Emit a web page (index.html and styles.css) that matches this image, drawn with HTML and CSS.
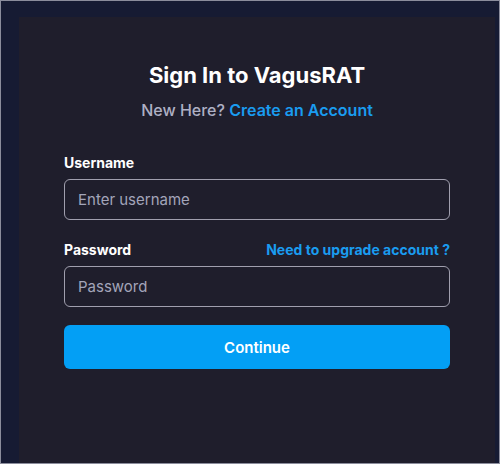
FILE: index.html
```html
<!DOCTYPE html>
<html>
<head>
<meta charset="utf-8">
<link rel="stylesheet" href="styles.css">
</head>
<body>
<div class="frame">
  <div class="card">
    <h1 class="title">Sign In to VagusRAT</h1>
    <p class="subtitle">New Here? <a class="link" href="#">Create an Account</a></p>
    <div class="field">
      <div class="label-row"><label class="label">Username</label></div>
      <input class="input" type="text" placeholder="Enter username">
    </div>
    <div class="field">
      <div class="label-row"><label class="label">Password</label><a class="upgrade" href="#">Need to upgrade account ?</a></div>
      <input class="input" type="password" placeholder="Password">
    </div>
    <button class="btn">Continue</button>
  </div>
</div>
</body>
</html>
```
FILE: styles.css
```css
html, body { margin: 0; padding: 0; }
body {
  font-family: "Inter", "Noto Sans", sans-serif;
  background: #161b33;
}
.frame {
  box-sizing: border-box;
  width: 500px;
  height: 464px;
  border: 1px solid #8b8d9c;
  background: #161b33;
  padding: 16px 4px 0 18px;
  display: flex;
}
.card {
  flex: 1;
  background: #1f1e2c;
  padding: 44px 45px 0 45px;
  display: flex;
  flex-direction: column;
}
.title {
  margin: 0;
  text-align: center;
  color: #ffffff;
  font-size: 22px;
  font-weight: 700;
  line-height: 28px;
}
.subtitle {
  margin: 10px 0 0;
  text-align: center;
  color: #aeb0c4;
  font-size: 16px;
  line-height: 22px;
  font-weight: 500;
}
.link { color: #1a9cf0; text-decoration: none; font-weight: 600; }
.field { display: flex; flex-direction: column; margin-top: 19px; }
.subtitle + .field { margin-top: 31px; }
.label-row {
  display: flex;
  justify-content: space-between;
  align-items: center;
  height: 20px;
  margin-bottom: 7px;
}
.label { color: #ffffff; font-size: 14px; font-weight: 700; }
.upgrade { color: #1a9cf0; font-size: 14px; font-weight: 700; text-decoration: none; }
.input {
  box-sizing: border-box;
  height: 41px;
  border: 1px solid #a09fae;
  border-radius: 6px;
  background: #1f1e2c;
  padding: 0 13px;
  font-family: inherit;
  font-size: 15px;
  color: #fff;
  outline: none;
}
.input::placeholder { color: #a3a5ba; }
.btn {
  margin-top: 18px;
  height: 44px;
  border: none;
  border-radius: 6px;
  background: #039ff5;
  color: #fff;
  font-family: inherit;
  font-size: 15px;
  font-weight: 600;
}
```
